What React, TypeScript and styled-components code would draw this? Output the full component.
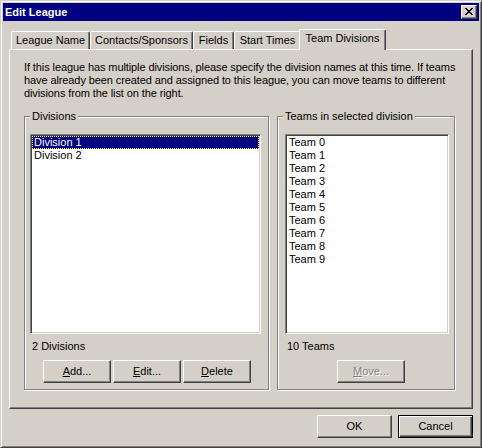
import React from 'react'
import styled, { createGlobalStyle } from 'styled-components'

const GlobalStyle = createGlobalStyle`
  html, body {
    margin: 0;
    padding: 0;
    background: #d4d0c8;
  }
  body {
    font-family: 'Liberation Sans', Arial, sans-serif;
    font-size: 11px;
    color: #000;
  }
`

const tabs = [
  { label: 'League Name', width: 79 },
  { label: 'Contacts/Sponsors', width: 103 },
  { label: 'Fields', width: 41 },
  { label: 'Start Times', width: 67 },
  { label: 'Team Divisions', width: 83 },
]

const divisions = ['Division 1', 'Division 2']
const teams = Array.from({ length: 10 }, (_, i) => `Team ${i}`)

const CloseGlyph = () => (
  <svg width='8' height='7' viewBox='0 0 8 7' shapeRendering='crispEdges'>
    <path
      fill='#000'
      d='M0 0h2v1H0z M6 0h2v1H6z M1 1h2v1H1z M5 1h2v1H5z M2 2h4v1H2z M3 3h2v1H3z M2 4h4v1H2z M1 5h2v1H1z M5 5h2v1H5z M0 6h2v1H0z M6 6h2v1H6z'
    />
  </svg>
)

const App = () => {
  return (
    <>
      <GlobalStyle />
      <Window>
        <TitleBar>
          <Title>Edit League</Title>
          <CloseButton>
            <CloseGlyph />
          </CloseButton>
        </TitleBar>
        <Body>
          <TabRow>
            {tabs.map((t, i) => (
              <Tab key={t.label} $width={t.width} $active={i === tabs.length - 1}>
                {t.label}
              </Tab>
            ))}
          </TabRow>
          <Panel>
            <Intro>
              If this league has multiple divisions, please specify the division names at this time. If teams
              <br />
              have already been created and assigned to this league, you can move teams to different
              <br />
              divisions from the list on the right.
            </Intro>
            <Groups>
              <Group $width={245} $pad={5}>
                <Legend>Divisions</Legend>
                <ListBox $width={231}>
                  {divisions.map((d, i) => (
                    <ListItem key={d} $selected={i === 0}>{d}</ListItem>
                  ))}
                </ListBox>
                <CountLabel>2 Divisions</CountLabel>
                <ButtonRow $offset={13}>
                  <Button><u>A</u>dd...</Button>
                  <Button><u>E</u>dit...</Button>
                  <Button><u>D</u>elete</Button>
                </ButtonRow>
              </Group>
              <Group $width={178} $pad={7}>
                <Legend>Teams in selected division</Legend>
                <ListBox $width={164}>
                  {teams.map(t => (
                    <ListItem key={t}>{t}</ListItem>
                  ))}
                </ListBox>
                <CountLabel>10 Teams</CountLabel>
                <ButtonRow $offset={52}>
                  <Button disabled><u>M</u>ove...</Button>
                </ButtonRow>
              </Group>
            </Groups>
          </Panel>
          <Footer>
            <Button $width={75}>OK</Button>
            <Button $width={75} $default>Cancel</Button>
          </Footer>
        </Body>
      </Window>
    </>
  )
}

const Window = styled.div`
  box-sizing: border-box;
  width: 482px;
  height: 448px;
  padding: 2px;
  background: #d4d0c8;
  border: 1px solid;
  border-color: #d4d0c8 #404040 #404040 #d4d0c8;
  box-shadow: inset 1px 1px 0 #fff, inset -1px -1px 0 #808080;
`

const TitleBar = styled.div`
  display: flex;
  align-items: center;
  justify-content: space-between;
  height: 18px;
  padding: 0 2px 0 2px;
  background: #000080;
`

const Title = styled.div`
  color: #fff;
  font-weight: bold;
  font-size: 11px;
  line-height: 13px;
`

const CloseButton = styled.div`
  box-sizing: border-box;
  width: 16px;
  height: 14px;
  display: flex;
  align-items: flex-start;
  justify-content: center;
  padding-top: 2px;
  background: #d4d0c8;
  border: 1px solid;
  border-color: #fff #404040 #404040 #fff;
  box-shadow: inset -1px -1px 0 #808080;
`

const Body = styled.div`
  padding: 8px 6px 0;
`

const TabRow = styled.div`
  display: flex;
  align-items: flex-end;
  height: 20px;
  padding-left: 2px;
`

const Tab = styled.div<{ $width: number; $active?: boolean }>`
  position: relative;
  box-sizing: border-box;
  width: ${p => p.$width + (p.$active ? 4 : 0)}px;
  height: ${p => (p.$active ? 21 : 18)}px;
  margin: ${p => (p.$active ? '0 -2px -1px' : '0')};
  z-index: ${p => (p.$active ? 1 : 0)};
  padding-top: 2px;
  text-align: center;
  line-height: 13px;
  white-space: nowrap;
  background: #d4d0c8;
  border-top: 1px solid #fff;
  border-left: 1px solid #fff;
  border-right: 1px solid #404040;
  border-top-left-radius: 2px;
  border-top-right-radius: 2px;
  box-shadow: inset -1px 0 0 #808080;
`

const Panel = styled.div`
  box-sizing: border-box;
  width: 464px;
  height: 360px;
  padding: 11px 0 0 14px;
  border: 1px solid;
  border-color: #fff #404040 #404040 #fff;
  box-shadow: inset -1px -1px 0 #808080;
`

const Intro = styled.div`
  line-height: 13px;
  white-space: nowrap;
  letter-spacing: -0.1px;
`

const Groups = styled.div`
  display: flex;
  gap: 8px;
  margin-top: 16px;
`

const Group = styled.div<{ $width: number; $pad: number }>`
  position: relative;
  box-sizing: border-box;
  width: ${p => p.$width}px;
  height: 274px;
  padding: 17px 0 0 ${p => p.$pad}px;
  border: 1px solid #808080;
  box-shadow: 1px 1px 0 #fff, inset 1px 1px 0 #fff;
`

const Legend = styled.span`
  position: absolute;
  top: -7px;
  left: 5px;
  padding: 0 2px;
  line-height: 13px;
  background: #d4d0c8;
  white-space: nowrap;
`

const ListBox = styled.div<{ $width: number }>`
  box-sizing: border-box;
  width: ${p => p.$width}px;
  height: 200px;
  background: #fff;
  border: 1px solid;
  border-color: #808080 #fff #fff #808080;
  box-shadow: inset 1px 1px 0 #404040, inset -1px -1px 0 #d4d0c8;
  padding: 1px;
  overflow: hidden;
`

const ListItem = styled.div<{ $selected?: boolean }>`
  height: 13px;
  line-height: 13px;
  padding: 0 2px;
  white-space: nowrap;
  color: ${p => (p.$selected ? '#fff' : '#000')};
  background: ${p => (p.$selected ? '#000080' : 'transparent')};
  outline: ${p => (p.$selected ? '1px dotted #ffff80' : 'none')};
  outline-offset: -1px;
`

const CountLabel = styled.div`
  margin-top: 6px;
  padding-left: 2px;
  line-height: 13px;
`

const ButtonRow = styled.div<{ $offset: number }>`
  display: flex;
  gap: 2px;
  margin-top: 7px;
  padding-left: ${p => p.$offset}px;
`

const Button = styled.button<{ $width?: number; $default?: boolean }>`
  box-sizing: border-box;
  width: ${p => p.$width ?? 68}px;
  height: 23px;
  padding: 0;
  font-family: 'Liberation Sans', Arial, sans-serif;
  font-size: 11px;
  line-height: 13px;
  color: #000;
  background: #d4d0c8;
  border: 1px solid;
  border-color: ${p => (p.$default ? '#000' : '#fff #404040 #404040 #fff')};
  border-radius: 0;
  box-shadow: ${p =>
    p.$default
      ? 'inset 1px 1px 0 #fff, inset -1px -1px 0 #404040, inset -2px -2px 0 #808080'
      : 'inset -1px -1px 0 #808080'};

  u {
    text-underline-offset: 1px;
  }

  &:disabled {
    color: #808080;
    text-shadow: 1px 1px 0 #fff;
  }
`

const Footer = styled.div`
  display: flex;
  justify-content: flex-end;
  gap: 6px;
  margin-top: 6px;
`

export default App
